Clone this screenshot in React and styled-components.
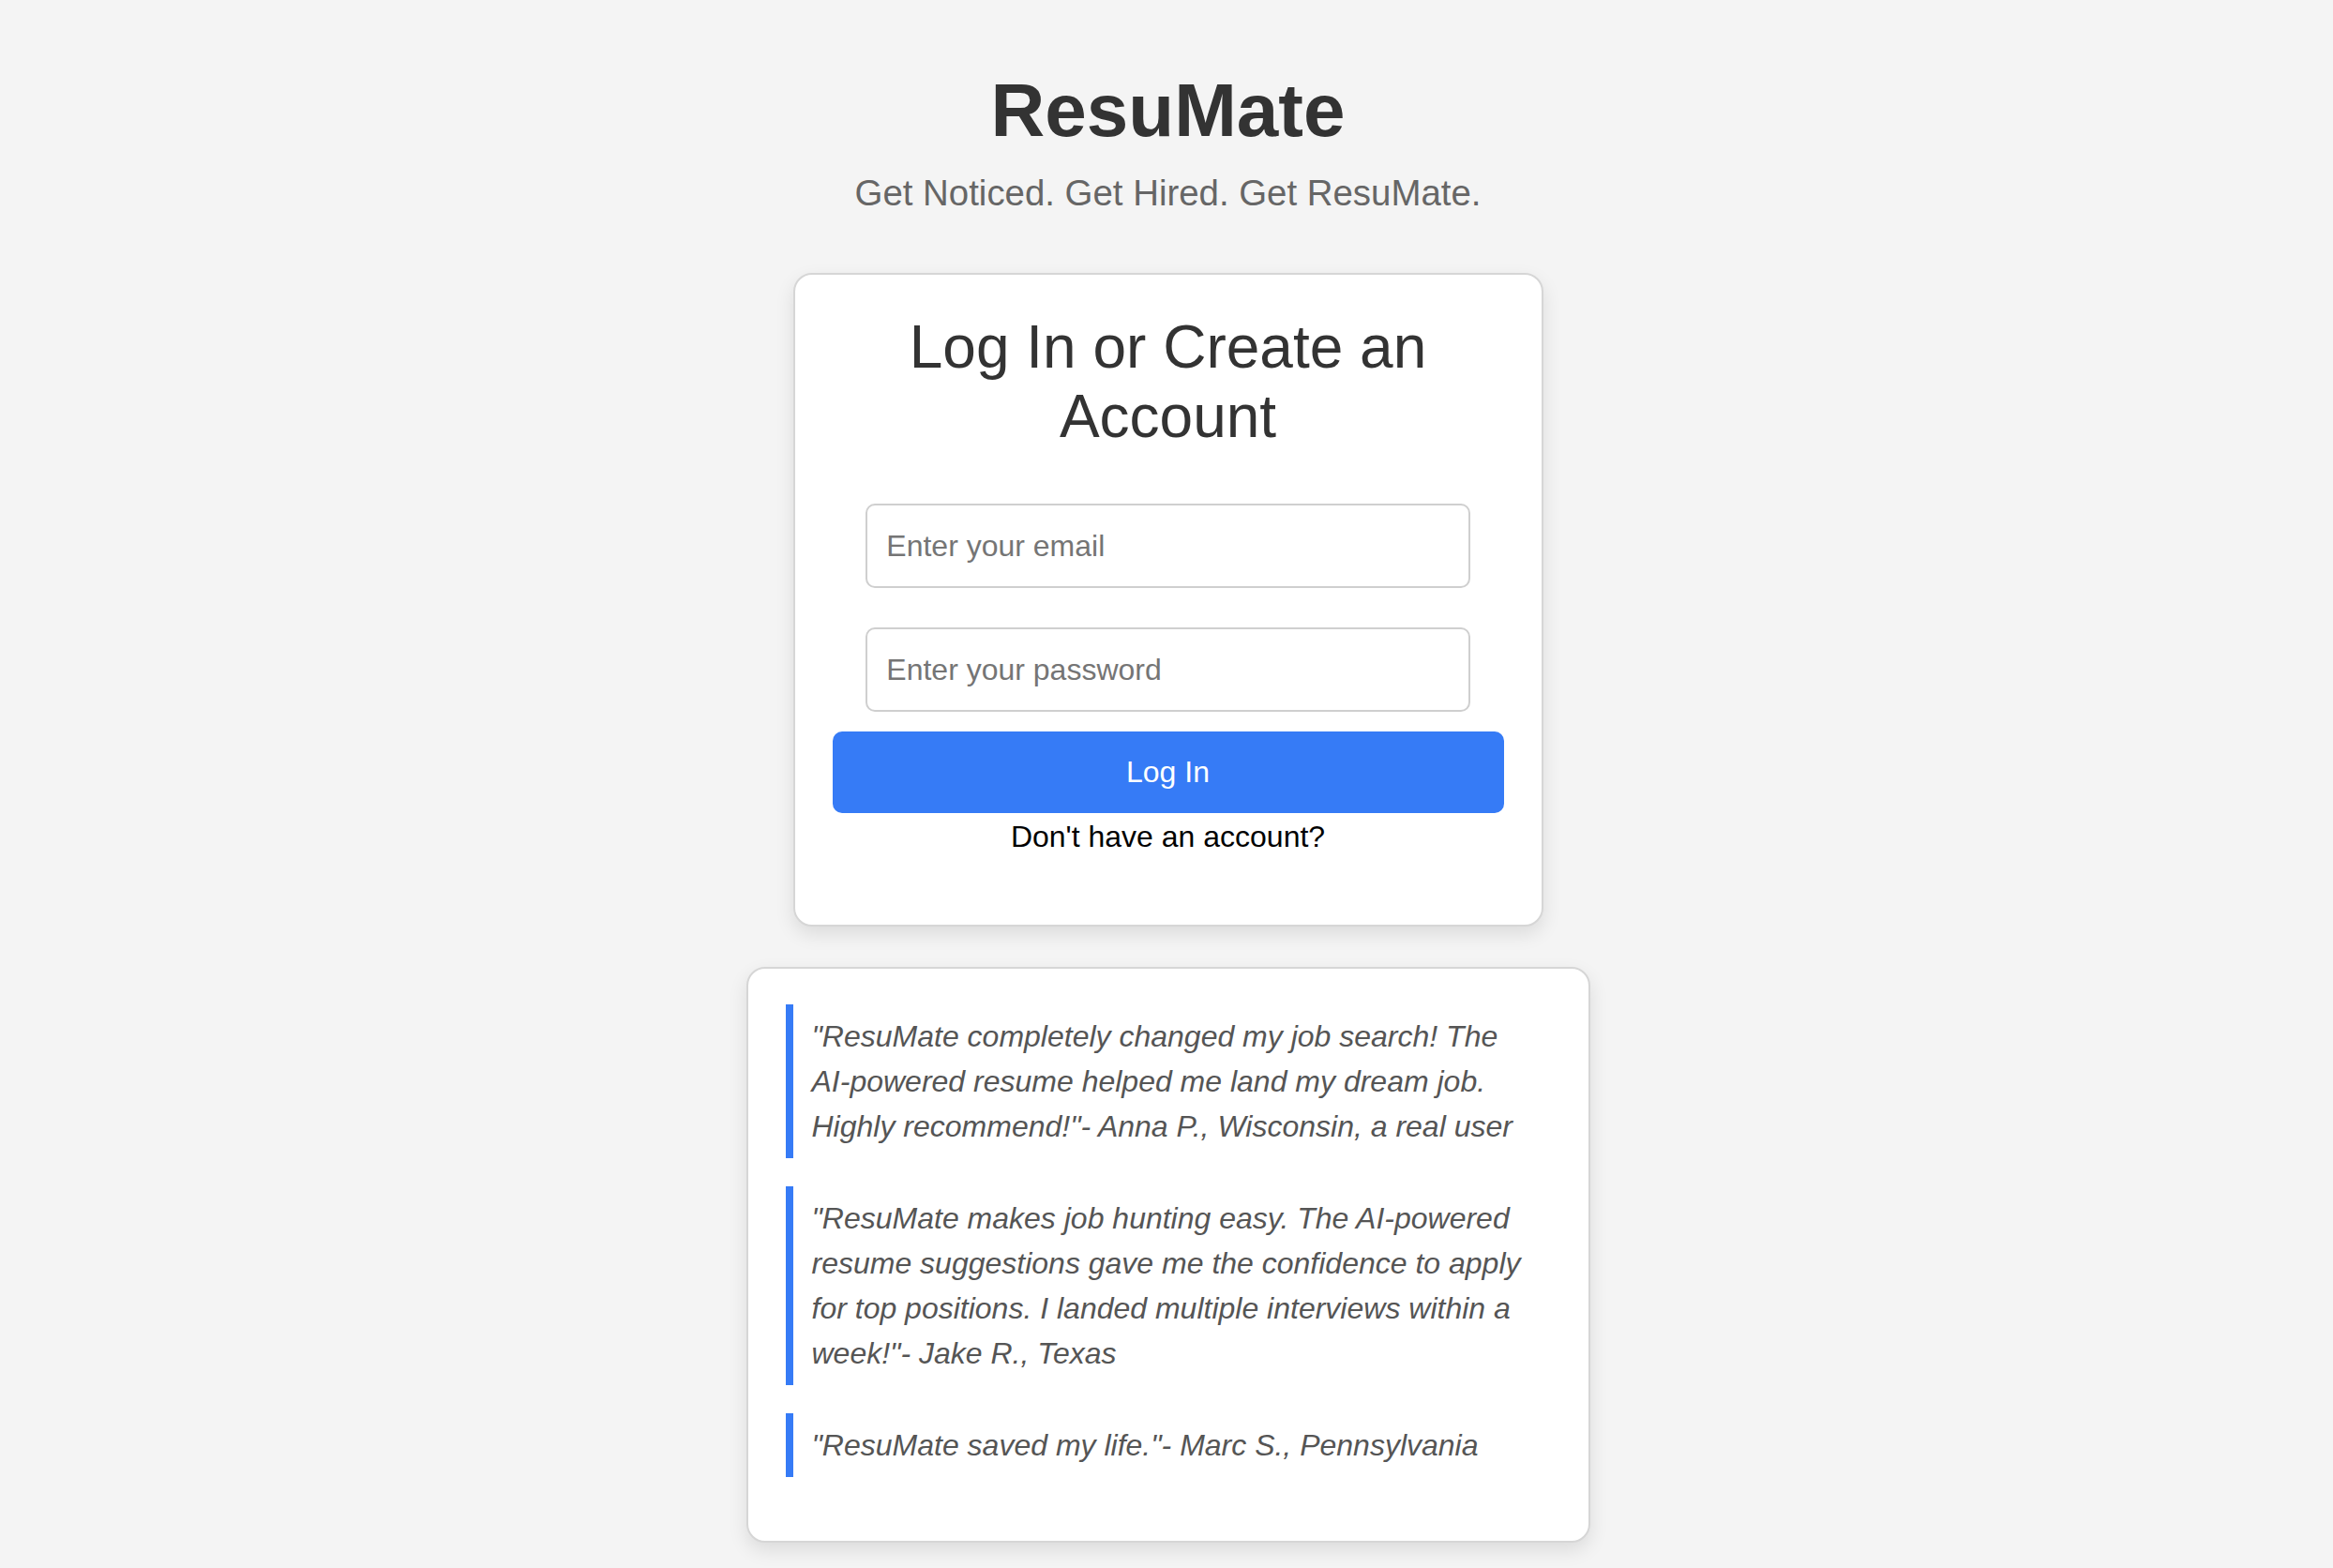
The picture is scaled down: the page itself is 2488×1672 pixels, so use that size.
import React from 'react';
import styled, { createGlobalStyle } from 'styled-components';

const testimonials = [
  '"ResuMate completely changed my job search! The AI-powered resume helped me land my dream job. Highly recommend!"- Anna P., Wisconsin, a real user',
  '"ResuMate makes job hunting easy. The AI-powered resume suggestions gave me the confidence to apply for top positions. I landed multiple interviews within a week!"- Jake R., Texas',
  '"ResuMate saved my life."- Marc S., Pennsylvania',
];

const App = () => {
  return (
    <>
      <GlobalStyle />
      <Page>
        <Header>
          <Brand>ResuMate</Brand>
          <Tagline>Get Noticed. Get Hired. Get ResuMate.</Tagline>
        </Header>

        <LoginCard>
          <CardTitle>Log In or Create an Account</CardTitle>
          <TextInput type="email" placeholder="Enter your email" />
          <TextInput type="password" placeholder="Enter your password" $gap="21px" />
          <PrimaryButton type="button">Log In</PrimaryButton>
          <SignupText>Don't have an account?</SignupText>
        </LoginCard>

        <TestimonialCard>
          {testimonials.map((text) => (
            <Quote key={text}>{text}</Quote>
          ))}
        </TestimonialCard>
      </Page>
    </>
  );
};

const GlobalStyle = createGlobalStyle`
  * {
    box-sizing: border-box;
  }
  body {
    margin: 0;
    background: #f4f4f4;
    font-family: 'Liberation Sans', Arial, sans-serif;
    color: #333;
  }
`;

const Page = styled.div`
  display: flex;
  flex-direction: column;
  align-items: center;
  padding: 72px 0 26px 3px;
`;

const Header = styled.header`
  display: flex;
  flex-direction: column;
  align-items: center;
`;

const Brand = styled.h1`
  margin: 0;
  font-size: 80px;
  line-height: 92px;
  font-weight: 700;
  color: #333;
`;

const Tagline = styled.p`
  margin: 20px 0 0;
  font-size: 38.4px;
  line-height: 44px;
  color: #666;
`;

const Card = styled.div`
  background: #fff;
  border: 2px solid #d6d6d6;
  border-radius: 20px;
  box-shadow: 0 8px 20px rgba(0, 0, 0, 0.1);
`;

const LoginCard = styled(Card)`
  width: 800px;
  margin-top: 63px;
  padding: 40px;
  display: flex;
  flex-direction: column;
  align-items: center;
`;

const CardTitle = styled.h2`
  margin: 0 0 56px;
  font-size: 64px;
  line-height: 74px;
  font-weight: 400;
  text-align: center;
  color: #333;
`;

const TextInput = styled.input`
  width: 90%;
  height: 90px;
  margin-bottom: ${(p) => p.$gap || '42px'};
  padding: 0 20px;
  border: 2px solid #cfcfcf;
  border-radius: 10px;
  font-family: 'Liberation Sans', Arial, sans-serif;
  font-size: 32px;
  color: #333;
  outline: none;

  &::placeholder {
    color: #757575;
  }
`;

const PrimaryButton = styled.button`
  width: 100%;
  height: 87px;
  border: none;
  border-radius: 10px;
  background: #367bf6;
  color: #fff;
  font-family: 'Liberation Sans', Arial, sans-serif;
  font-size: 32px;
  cursor: pointer;
`;

const SignupText = styled.p`
  margin: 7px 0 35px;
  font-size: 32px;
  line-height: 37px;
  color: #000;
  text-align: center;
`;

const TestimonialCard = styled(Card)`
  width: 900px;
  margin-top: 43px;
  padding: 38px 40px;
`;

const Quote = styled.blockquote`
  margin: 0 0 30px;
  padding: 10px 20px;
  border-left: 8px solid #367bf6;
  font-style: italic;
  font-size: 32px;
  line-height: 48px;
  color: #555;
`;

export default App;
